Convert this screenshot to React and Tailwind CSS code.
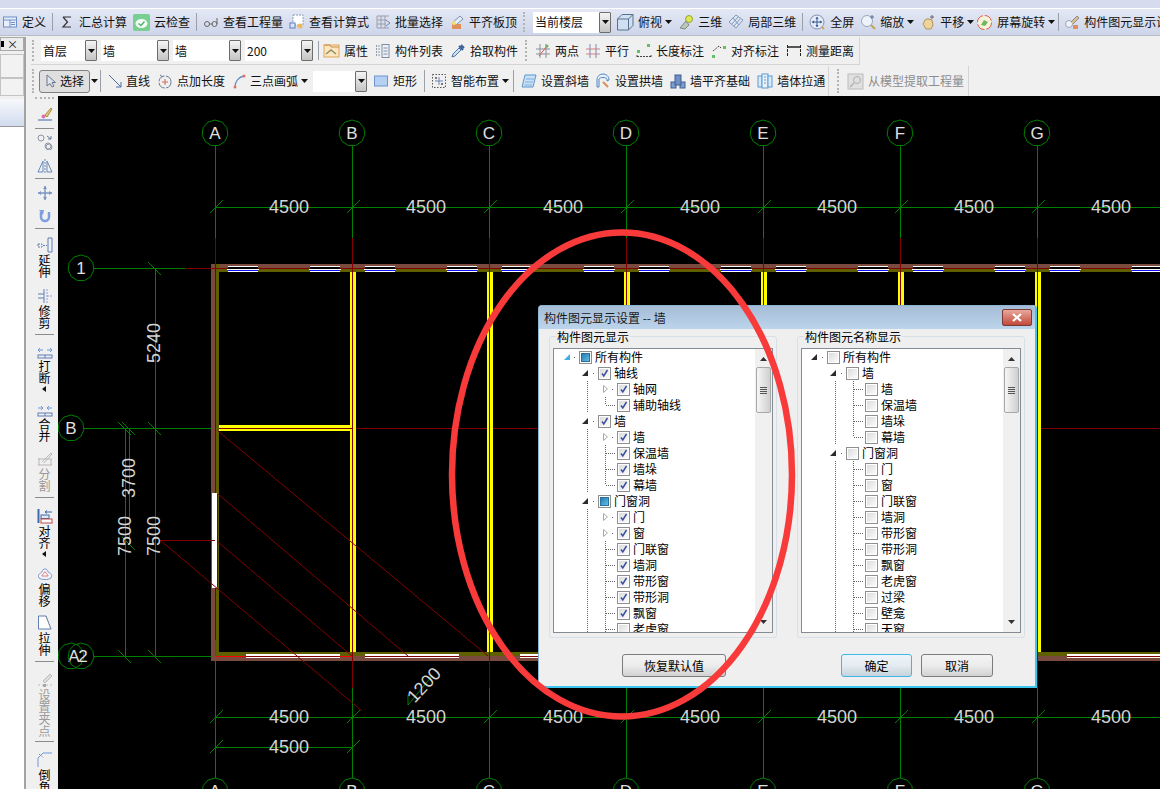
import React from "react";

// =========================
// SMALL PARTS
// =========================

const I = ({ children, w = 16, h = 16 }) => (
  <svg width={w} height={h} viewBox={`0 0 ${w} ${h}`} fill="none" className="shrink-0">
    {children}
  </svg>
);

const Caret = () => (
  <svg width="7" height="4" viewBox="0 0 7 4" className="shrink-0">
    <path d="M0 0H7L3.5 4Z" fill="#111" />
  </svg>
);

const Sep = ({ className = "" }) => (
  <div className={`w-px self-stretch my-[4px] bg-[#9aa0aa] shrink-0 ${className}`} />
);

const Grip = ({ className = "" }) => (
  <div className={`w-[2px] self-stretch my-[3px] border-l-2 border-dotted border-[#b4b4b4] shrink-0 ${className}`} />
);

const Tool = ({ icon, label, caret, muted, className = "" }) => (
  <div className={`flex items-center gap-[4px] shrink-0 whitespace-nowrap ${className}`}>
    {icon}
    <span className={muted ? "text-[#8c8c8c]" : ""}>{label}</span>
    {caret && <span className="-ml-[1px] flex"><Caret /></span>}
  </div>
);

const Select = ({ label, className = "" }) => (
  <div className={`flex h-[21px] items-stretch bg-white shrink-0 ${className}`}>
    <span className="flex-1 pl-[2px] flex items-center">{label}</span>
    <span className="w-[12px] flex items-center justify-center border border-[#6d6d6d] rounded-[1px] bg-linear-to-b from-[#f4f4f4] to-[#c4c4c4]">
      <Caret />
    </span>
  </div>
);

// =========================
// TOOLBAR ICONS
// =========================

const icons = {
  define: <I><rect x="1.5" y="3" width="13" height="10" fill="#e8eefb" stroke="#6d8fc4" /><path d="M1.5 6H14.5M8 6V13M9 8.5H13M9 10.5H13" stroke="#6d8fc4" /></I>,
  sigma: <I><path d="M4 3H12M4 3L8.5 8L4 13H12" stroke="#333" strokeWidth="1.2" /></I>,
  cloud: <I w={17} h={17}><rect width="17" height="17" rx="2" fill="#79cf92" /><ellipse cx="8.5" cy="9.5" rx="6" ry="4.5" fill="#f2fbf4" /><path d="M5.5 9.5L8 11.5L11.5 7.5" stroke="#57b673" strokeWidth="1.5" /></I>,
  glasses: <I><circle cx="4" cy="10" r="2.5" stroke="#666" /><circle cx="11.5" cy="10" r="2.5" stroke="#666" /><path d="M6.5 10H9M14 10V4" stroke="#666" /></I>,
  sheet: <I><rect x="4" y="1" width="10" height="10" fill="#fff" stroke="#8c9bb5" strokeDasharray="2 1" /><rect x="1" y="9" width="5" height="5" fill="#d8e5fb" stroke="#5a7fc2" /><circle cx="11" cy="12" r="2.5" fill="#e9b95e" /></I>,
  batch: <I><path d="M2 2H14M2 6H11M2 10H11M2 14H14M2 2V14M6 2V14M10 2V14" stroke="#9a9fa8" /><path d="M11 6L15 9L11 12" stroke="#7a88a5" /></I>,
  level: <I><path d="M3 9L11 2L14 5L7 11Z" fill="#e5ecf7" stroke="#7d8ea8" /><rect x="3" y="10" width="9" height="5" fill="#df8f58" /><circle cx="5" cy="9" r="2" fill="#f3e27a" /></I>,
  box: <I w={18} h={18}><path d="M1.5 6H12.5V17H1.5ZM1.5 6L6 1.5H17V12.5L12.5 17M12.5 6L17 1.5" fill="#cfe0f2" stroke="#58708e" /></I>,
  three: <I><circle cx="11" cy="5" r="3.5" fill="#dfe84f" stroke="#8ea53a" /><path d="M2 14L8 7L11 11L7 15Z" fill="#b7c6b8" stroke="#7f8c7f" /></I>,
  local: <I><path d="M8 1L15 6L8 14L1 8Z" fill="#dce6f3" stroke="#8299b8" /><path d="M5 4L11 11M10 3L4 10M12 5L6 12" stroke="#8299b8" /></I>,
  full: <I w={17} h={17}><circle cx="8" cy="8" r="7" fill="#e4ebf7" stroke="#7f93b6" /><path d="M8 3V13M3 8H13" stroke="#375a92" /><path d="M8 3L6.5 5H9.5ZM8 13L6.5 11H9.5ZM3 8L5 6.5V9.5ZM13 8L11 6.5V9.5Z" fill="#375a92" /><path d="M13 13L15 15" stroke="#d8a54a" strokeWidth="2" /></I>,
  zoom: <I><circle cx="7" cy="7" r="5.5" fill="#eef3fb" stroke="#98a6bd" /><path d="M11 11L15 15" stroke="#c9a24f" strokeWidth="2" /><path d="M12 1V5M10 3H14" stroke="#58708e" /></I>,
  pan: <I><path d="M3 10L5 6L7 5L9 5L12 6L13 11L11 15H6Z" fill="#ecd49a" stroke="#b4945a" /><path d="M12 1V5M10 3H14" stroke="#666" /></I>,
  rotate: <I w={17} h={17}><circle cx="8.5" cy="8.5" r="7" fill="#f7f3da" stroke="#e25b4b" strokeDasharray="9 2" /><path d="M5 11L8 6L12 8L9 12Z" fill="#6fb85f" /></I>,
  display: <I><circle cx="5" cy="10" r="3.5" fill="#eef2f8" stroke="#9aa5b8" /><path d="M7 8L13 2L15 4L9 10" fill="#d8c08c" stroke="#8d8d8d" /><rect x="9" y="11" width="5" height="4" fill="#d98e68" /></I>,
  attr: <I w={17} h={17}><rect x="1" y="3" width="15" height="12" fill="#fbe6c0" stroke="#e0a35a" /><path d="M3 12L8 8L13 12" stroke="#8b8f6a" strokeWidth="1.5" /><path d="M1 3H7L8 5H16" stroke="#c98e4a" /></I>,
  list: <I><path d="M1.5 2V14M4 2V14" stroke="#8f9aaa" strokeDasharray="2 1" /><rect x="7" y="1.5" width="7" height="13" fill="#eef2f8" stroke="#7e8ca3" /><path d="M8.5 5H12.5M8.5 8H12.5M8.5 11H12.5" stroke="#7e8ca3" /></I>,
  picker: <I><path d="M2 14L3 11L9 5L11 7L5 13Z" fill="#cfe1f5" stroke="#4f74a8" /><path d="M9 3L13 7M11 2L14 5" stroke="#3e6296" strokeWidth="2" /></I>,
  twoPt: <I><path d="M1 6H15M1 11H15M5 1V15M11 1V15" stroke="#8b8fa0" /><path d="M4 13L12 3" stroke="#d95a4b" /><circle cx="12" cy="3" r="1.5" fill="#66b85c" /></I>,
  parallel: <I><path d="M1 6H15M1 11H15" stroke="#d98080" /><path d="M5 1V15M11 1V15" stroke="#7f86ad" /></I>,
  lenDim: <I><rect x="11" y="1" width="3" height="3" fill="#62c263" /><rect x="1" y="7" width="3" height="3" fill="#62c263" /><path d="M1 12V15M15 12V15M1 13.5H15" stroke="#444" strokeDasharray="2 1" /></I>,
  alignDim: <I><rect x="1" y="12" width="3" height="3" fill="#62c263" /><rect x="12" y="3" width="3" height="3" fill="#62c263" /><path d="M2 8L8 3L10 5" stroke="#444" strokeDasharray="2 1" /></I>,
  measure: <I><path d="M1.5 2V14M14.5 2V14" stroke="#222" strokeDasharray="3 1" /><path d="M1 4H15" stroke="#222" strokeWidth="1.5" /></I>,
  cursor: <I w={12} h={14}><path d="M2 1L2 12L5 9.5L7 13L9 12L7 8.5L10.5 8.5Z" fill="#dfe6f2" stroke="#6a7688" /></I>,
  line: <I w={14} h={14}><path d="M1 1L13 13M13 13H8M13 13V8" stroke="#4a6fa5" /></I>,
  ptLen: <I><circle cx="8" cy="9" r="6" stroke="#6c7a92" strokeDasharray="8 1.5" /><path d="M8 6V12M5 9H11" stroke="#d06a5a" /><path d="M3 2L6 4" stroke="#6c7a92" /></I>,
  arc: <I w={13} h={15}><path d="M2 13C2 7 6 3 11 2" stroke="#6a8fc2" strokeWidth="1.3" /><circle cx="2" cy="13" r="1.5" fill="#e0735f" /><circle cx="11" cy="2" r="1.5" fill="#e0735f" /></I>,
  rect: <I><rect x="1.5" y="3" width="13" height="10" fill="#b6d0f3" stroke="#6f95cb" /></I>,
  smart: <I><rect x="1.5" y="1.5" width="13" height="13" stroke="#555" strokeDasharray="1.5 1.5" /><path d="M8 4V12M4 8H12" stroke="#6b87b5" /><circle cx="5" cy="5" r="1" fill="#555" /><circle cx="11" cy="11" r="1" fill="#555" /></I>,
  slant: <I><path d="M4 2H15L12 14H1Z" fill="#c9e0f6" stroke="#5d96cc" /><path d="M5 6H13M4 9H12M3.5 12H11" stroke="#7fb0dc" /></I>,
  archWall: <I><path d="M2 7C2 3 5 1 8 1C11 1 14 3 14 7L12 8V6C11 4 5 4 4 6V14H2Z" fill="#e6f0fb" stroke="#4d87bd" /><path d="M8 9L13 14" stroke="#dd8c55" strokeWidth="2" /></I>,
  alignBase: <I><rect x="1" y="9" width="5" height="6" fill="#7f9ed0" stroke="#3f5f93" /><rect x="10" y="9" width="5" height="6" fill="#7f9ed0" stroke="#3f5f93" /><rect x="5" y="2" width="6" height="10" fill="#6f90c6" stroke="#3f5f93" /></I>,
  through: <I><rect x="1" y="3" width="4" height="11" fill="#dbeafa" stroke="#5d9bd0" /><rect x="5" y="1" width="6" height="14" fill="#e9f3fc" stroke="#5d9bd0" /><rect x="11" y="3" width="4" height="11" fill="#dbeafa" stroke="#5d9bd0" /><path d="M7 4H9M7 7H9M7 10H9" stroke="#5d9bd0" /></I>,
  extract: <I w={17} h={17}><rect x="1" y="1" width="15" height="15" fill="#e0e0e0" stroke="#bcbcbc" /><circle cx="10" cy="7" r="3.5" stroke="#b0b0b0" /><path d="M7 10L3 14" stroke="#b0b0b0" strokeWidth="1.5" /></I>,
};

const vIcons = {
  brush: <I><path d="M8 9L14 2L15 3L10 11Z" fill="#e8c66e" stroke="#a78d45" /><circle cx="6.5" cy="10.5" r="2" fill="#d774a8" /><path d="M1 14H15" stroke="#5c7fb5" strokeWidth="1.2" /></I>,
  copy: <I><circle cx="4" cy="4" r="3" stroke="#8b95a6" /><path d="M10 2L14 5M14 5H11M14 5V2" stroke="#6a7f9f" /><circle cx="11" cy="12" r="3" stroke="#8b95a6" /><circle cx="12" cy="13" r="3" stroke="#8b95a6" /></I>,
  mirror: <I><path d="M8 1V15" stroke="#6a89bc" strokeDasharray="2 1" /><path d="M6 3L1 14H6ZM10 3L15 14H10Z" stroke="#6a89bc" /></I>,
  move: <I><path d="M8 1V15M1 8H15" stroke="#7a95c2" strokeWidth="1.4" /><path d="M8 1L6 4H10ZM8 15L6 12H10ZM1 8L4 6V10ZM15 8L12 6V10Z" fill="#7a95c2" /></I>,
  rotate: <I><path d="M4 4V9A4 4 0 0 0 12 9V4" stroke="#7d9de0" strokeWidth="2.5" /><path d="M2 2L7 2L6 7Z" fill="#7d9de0" /></I>,
  extend: <I><path d="M11 1H15V15H11Z" stroke="#5f7fb5" /><path d="M1 7H5V10H1ZM6 8.5H10" stroke="#5f7fb5" strokeDasharray="2 1" /></I>,
  trim: <I><path d="M1 6H7M1 10H7M7 1V15" stroke="#5f7fb5" /><path d="M10 1V15M10 8H15" stroke="#8ba5cf" strokeDasharray="2 1" /></I>,
  brk: <I h={12}><path d="M1 3H6M15 3H10M1 3L3 1M1 3L3 5M15 3L13 1M15 3L13 5" stroke="#6f97d9" /><rect x="1" y="8" width="14" height="3" stroke="#5f7fb5" /><path d="M8 8V11" stroke="#5f7fb5" /></I>,
  merge: <I h={12}><path d="M1 3H6L4 1M6 3L4 5M15 3H10L12 1M10 3L12 5" stroke="#6f97d9" /><rect x="1" y="8" width="14" height="3" stroke="#5f7fb5" /><path d="M8 8V11" stroke="#5f7fb5" /></I>,
  split: <I><path d="M1 8H15M1 14H15M2 14L2 7M14 14L14 8M5 11L14 2L15 3L7 12" stroke="#b8b8b8" /></I>,
  align: <I><path d="M1.5 1V15" stroke="#3f68ad" strokeWidth="2" /><rect x="4" y="7" width="8" height="3.5" fill="#dfe8f7" stroke="#3f68ad" /><rect x="4" y="11" width="11" height="4" fill="#fff" stroke="#c04b45" /><path d="M8 4H15M8 4L10 2.5M8 4L10 5.5" stroke="#3f68ad" /></I>,
  offset: <I><path d="M2 12C0 8 4 7 5 6C5 2 11 2 11 6C13 7 16 8 14 12C12 14 4 14 2 12Z" fill="#eef3fb" stroke="#7f9cc8" /><path d="M5 10C5 8 7 8 7 7C7 5.5 9 5.5 9 7C9 8 11 8 11 10Z" fill="#fff" stroke="#e07a7a" /></I>,
  stretch: <I><path d="M1.5 1H9L14 14H1.5Z" fill="#fff" stroke="#5f7fb5" /><path d="M9 1L14 14" stroke="#8b8b8b" strokeDasharray="1.5 1.5" /></I>,
  grip: <I><path d="M6 9L13 2L15 4L8 11Z" fill="#dcdcdc" stroke="#bcbcbc" /><path d="M1 13H15" stroke="#bcbcbc" strokeDasharray="2 2" /><rect x="6" y="12" width="3" height="3" fill="#a8a8a8" /></I>,
  chamfer: <I><path d="M1 15V6L6 1H15" stroke="#6f97d9" /><path d="M2 2L7 6" stroke="#8f8f8f" strokeDasharray="1.5 1.5" /></I>,
};

// =========================
// VERTICAL TOOLBAR
// =========================

const VSep = ({ className }) => <div className={`w-[19px] h-px bg-[#8c8c8c] shrink-0 ${className}`} />;

const VText = ({ text, muted, arrow }) => (
  <div className={`flex flex-col items-center mt-[1px] shrink-0 leading-[12px] ${muted ? "text-[#9a9a9a]" : "text-black"}`}>
    {text.split("").map((c, i) => (
      <span key={i} className="h-[12px]">{c}</span>
    ))}
    {arrow && (
      <svg width="4" height="6" viewBox="0 0 4 6" className="mt-[2px]">
        <path d="M4 0V6L0 3Z" fill="#111" />
      </svg>
    )}
  </div>
);

const SideBar = () => (
  <div className="w-[27px] shrink-0 bg-[#f0f0f0] flex flex-col items-center overflow-hidden">
    <div className="h-[2px] w-[19px] mt-[1px] border-t-2 border-dotted border-[#b4b4b4] shrink-0" />
    <div className="mt-[7px] flex shrink-0">{vIcons.brush}</div>
    <VSep className="mt-[6px]" />
    <div className="mt-[5px] flex shrink-0">{vIcons.copy}</div>
    <div className="mt-[8px] flex shrink-0">{vIcons.mirror}</div>
    <VSep className="mt-[4px]" />
    <div className="mt-[6px] flex shrink-0">{vIcons.move}</div>
    <div className="mt-[7px] flex shrink-0">{vIcons.rotate}</div>
    <VSep className="mt-[4px]" />
    <div className="mt-[8px] flex shrink-0">{vIcons.extend}</div>
    <VText text="延伸" />
    <div className="mt-[10px] flex shrink-0">{vIcons.trim}</div>
    <VText text="修剪" />
    <VSep className="mt-[5px]" />
    <div className="mt-[12px] flex shrink-0">{vIcons.brk}</div>
    <VText text="打断" arrow />
    <div className="mt-[13px] flex shrink-0">{vIcons.merge}</div>
    <VText text="合并" />
    <div className="mt-[9px] flex shrink-0">{vIcons.split}</div>
    <VText text="分割" muted />
    <VSep className="mt-[5px]" />
    <div className="mt-[10px] flex shrink-0">{vIcons.align}</div>
    <VText text="对齐" arrow />
    <div className="mt-[9px] flex shrink-0">{vIcons.offset}</div>
    <VText text="偏移" />
    <div className="mt-[8px] flex shrink-0">{vIcons.stretch}</div>
    <VText text="拉伸" />
    <VSep className="mt-[5px]" />
    <div className="mt-[10px] flex shrink-0">{vIcons.grip}</div>
    <VText text="设置夹点" muted />
    <VSep className="mt-[4px]" />
    <div className="mt-[10px] flex shrink-0">{vIcons.chamfer}</div>
    <VText text="倒角" />
  </div>
);

// =========================
// CAD DRAWING
// =========================

const COLS = [
  { x: 215, n: "A" },
  { x: 352, n: "B" },
  { x: 489, n: "C" },
  { x: 626, n: "D" },
  { x: 763, n: "E" },
  { x: 900, n: "F" },
  { x: 1037, n: "G" },
];
const G = "#008000";
const R = "#800000";
const TOP_WIN = [228, 310, 365, 447, 502, 584, 639, 721, 776, 858, 913, 995, 1050, 1132];
const BOTTOM_WIN = [246, 365, 520, 1067];

const Bubble = ({ x, y, label, dx = 0 }) => {
  const pts = Array.from({ length: 11 }, (_, i) => {
    const a = (i / 11) * Math.PI * 2 - Math.PI / 2;
    return `${x + 13 * Math.cos(a)},${y + 13 * Math.sin(a)}`;
  }).join(" ");
  return (
    <g>
      <polygon points={pts} fill="none" stroke={G} />
      <text x={x + dx} y={y + 6} textAnchor="middle" fontSize="17" fill="#e0e0e0">{label}</text>
    </g>
  );
};

const Dim = ({ x, y, text, rotate }) => (
  <text
    x={x}
    y={y}
    textAnchor="middle"
    dominantBaseline="central"
    fontSize="18"
    fill="#d4d4d4"
    transform={rotate ? `rotate(${rotate} ${x} ${y})` : undefined}
  >
    {text}
  </text>
);

const Tick = ({ x, y, back }) =>
  back ? (
    <path d={`M${x - 7} ${y - 6}L${x + 6} ${y + 7}`} stroke={G} />
  ) : (
    <path d={`M${x - 6} ${y + 6}L${x + 7} ${y - 7}`} stroke={G} />
  );

const Column = ({ x }) => (
  <g>
    <rect x={x - 2} y="272" width="6" height="380" fill="#ffff00" />
    <path d={`M${x + 0.5} 238V688`} stroke={R} />
  </g>
);

const Drawing = () => (
  <svg
    viewBox="58 96 1102 693"
    width="1102"
    height="693"
    className="block font-['Liberation_Sans',sans-serif]"
    shapeRendering="crispEdges"
  >
    <rect x="58" y="96" width="1102" height="693" fill="#000" />

    {/* axis lines */}
    {COLS.map((c) => (
      <g key={c.n}>
        <path d={`M${c.x + 0.5} 146V238`} stroke={G} />
        <path d={`M${c.x + 0.5} 688V778`} stroke={G} />
        <path d={`M${c.x + 0.5} 238V688`} stroke={R} />
        <Tick x={c.x + 0.5} y={207.5} />
        <Tick x={c.x + 0.5} y={717.5} />
      </g>
    ))}
    <path d="M215.5 656V778M352.5 656V778" stroke={G} />
    <path d="M94 268.5H185M84 428.5H215M94 656.5H215" stroke={G} />
    <path d="M185 268.5H1160M219 428.5H1160" stroke={R} />

    {/* dimension lines */}
    <path d="M215 207.5H1160M215 717.5H1160M215 747.5H352" stroke={G} />
    <Tick x={215.5} y={747.5} />
    <Tick x={352.5} y={747.5} />
    <path d="M155.5 268V656M125.5 428V656M129.5 428V543" stroke={G} />
    <Tick x={155} y={268} back />
    <Tick x={155} y={428} back />
    <Tick x={155} y={656} back />
    <Tick x={125} y={428} back />
    <Tick x={129} y={428} back />
    <Tick x={129} y={543} back />
    <Tick x={125} y={656} back />

    {/* walls */}
    <rect x="211" y="264" width="949" height="4" fill="#7b4a3f" />
    <rect x="211" y="268" width="949" height="4" fill="#5f5f00" />
    <rect x="211" y="264" width="4" height="397" fill="#7b4a3f" />
    <rect x="215" y="264" width="4" height="392" fill="#5f5f00" />
    <rect x="215" y="652" width="945" height="4" fill="#5f5f00" />
    <rect x="211" y="656" width="949" height="5" fill="#7b4a3f" />
    <path d="M185 268.5H1160" stroke={R} />
    <path d="M215.5 238V656" stroke={R} />
    <path d="M215.5 656.5H352" stroke="#ff0000" />
    <path d="M215.5 640V656" stroke="#ff0000" />

    {/* columns */}
    {COLS.slice(1).map((c) => <Column key={c.n} x={c.x} />)}
    <rect x="219" y="425" width="133" height="6" fill="#ffff00" />
    <rect x="219" y="428" width="133" height="1" fill={R} />

    {/* windows */}
    {TOP_WIN.map((x) => (
      <g key={x}>
        <rect x={x} y="266" width="30" height="1" fill="#fff" />
        <rect x={x} y="267" width="30" height="2" fill="#000" />
        <rect x={x - 1} y="269" width="32" height="1" fill="#fff" />
        <rect x={x} y="270" width="30" height="1" fill="#1010ff" />
        <rect x={x} y="271" width="30" height="1" fill="#fff" />
      </g>
    ))}
    {BOTTOM_WIN.map((x) => (
      <g key={x}>
        <rect x={x} y="654" width="94" height="4" fill="#fff" />
        <rect x={x} y="656" width="94" height="1" fill={R} />
      </g>
    ))}
    <rect x="212" y="493" width="5" height="95" fill="#fff" />
    <rect x="217" y="494" width="1" height="93" fill="#1010ff" />

    {/* slab lines */}
    <g shapeRendering="auto" stroke={R}>
      <path d="M160 540L362 711" />
      <path d="M218 542L352 656" />
      <path d="M218 494L408 656" />
      <path d="M218 431L488 656" />
      <path d="M160 540.5H215" />
    </g>

    {/* labels */}
    <g shapeRendering="auto">
      {COLS.map((c) => <Bubble key={c.n} x={c.x} y={133} label={c.n} />)}
      {COLS.map((c) => <Bubble key={c.n} x={c.x} y={791} label={c.n} />)}
      <Bubble x={81} y={268} label="1" />
      <Bubble x={71} y={428} label="B" />
      <Bubble x={71} y={656} label="A" dx={3} />
      <Bubble x={81} y={656} label="2" dx={2} />

      {COLS.map((c) => (
        <g key={c.n}>
          <Dim x={c.x + 74} y={207} text="4500" />
          <Dim x={c.x + 74} y={717} text="4500" />
        </g>
      ))}
      <Dim x={289} y={747} text="4500" />
      <Dim x={154} y={343} text="5240" rotate={-90} />
      <Dim x={154} y={536} text="7500" rotate={-90} />
      <Dim x={125} y={536} text="7500" rotate={-90} />
      <Dim x={129} y={478} text="3700" rotate={-90} />
      <path d="M408 705L432 676M408 695V705" stroke={G} />
      <Dim x={424} y={685} text="1200" rotate={-47} />
    </g>
  </svg>
);

// =========================
// TREE IN THE DIALOG
// =========================

const Check = ({ state }) => (
  <span className="w-[13px] h-[13px] shrink-0 border border-[#8e8f8f] p-px bg-white flex">
    {state === "tri" && <span className="flex-1 border border-[#2b6f9e] bg-linear-to-br from-[#1f7fb5] to-[#63bde4]" />}
    {state !== "tri" && (
      <span className="flex-1 bg-linear-to-br from-[#dcdcdc] to-[#fbfbfb] flex">
        {state === "on" && (
          <svg width="9" height="9" viewBox="0 0 9 9">
            <path d="M2 4.5L3.8 7L7.5 1" fill="none" stroke="#3c4fa0" strokeWidth="1.5" />
          </svg>
        )}
      </span>
    )}
  </span>
);

const Expander = ({ kind, last }) => (
  <svg width="20" height="16" viewBox="0 0 20 16" className="shrink-0">
    {kind === "root" && <path d="M5 11L11 5V11Z" fill="#3bb0e8" />}
    {kind === "down" && <path d="M4 11L10 5V11Z" fill="#2b2b2b" />}
    {kind === "right" && <path d="M6.5 4.5V11.5L10.5 8Z" fill="#fff" stroke="#a8a8a8" />}
    {kind === "leaf" && (
      <path
        d={`M8.5 0V${last ? 8 : 16}M8.5 8.5H18`}
        stroke="#666"
        strokeDasharray="1 1"
        fill="none"
        shapeRendering="crispEdges"
      />
    )}
    {kind !== "leaf" && <rect x="15" y="8" width="1" height="1" fill="#666" />}
  </svg>
);

const TreeRow = ({ label, level, state, kind, last }) => (
  <div className="flex h-4 items-center">
    {level > 0 && <span className="w-[19px] shrink-0" />}
    {level > 1 && (
      <svg width="19" height="16" viewBox="0 0 19 16" className="shrink-0">
        <path d="M9.5 0V16" stroke="#666" strokeDasharray="1 1" shapeRendering="crispEdges" />
      </svg>
    )}
    <Expander kind={kind} last={last} />
    <Check state={state} />
    <span className="ml-[3px] whitespace-nowrap text-black">{label}</span>
  </div>
);

const leftTree = [
  ["所有构件", 0, "tri", "root"],
  ["轴线", 1, "on", "down"],
  ["轴网", 2, "on", "right"],
  ["辅助轴线", 2, "on", "leaf", true],
  ["墙", 1, "on", "down"],
  ["墙", 2, "on", "right"],
  ["保温墙", 2, "on", "leaf"],
  ["墙垛", 2, "on", "leaf"],
  ["幕墙", 2, "on", "leaf", true],
  ["门窗洞", 1, "tri", "down"],
  ["门", 2, "on", "right"],
  ["窗", 2, "on", "right"],
  ["门联窗", 2, "on", "leaf"],
  ["墙洞", 2, "on", "leaf"],
  ["带形窗", 2, "on", "leaf"],
  ["带形洞", 2, "on", "leaf"],
  ["飘窗", 2, "on", "leaf"],
  ["老虎窗", 2, "off", "leaf"],
];

const rightTree = [
  ["所有构件", 0, "off", "down"],
  ["墙", 1, "off", "down"],
  ["墙", 2, "off", "leaf"],
  ["保温墙", 2, "off", "leaf"],
  ["墙垛", 2, "off", "leaf"],
  ["幕墙", 2, "off", "leaf", true],
  ["门窗洞", 1, "off", "down"],
  ["门", 2, "off", "leaf"],
  ["窗", 2, "off", "leaf"],
  ["门联窗", 2, "off", "leaf"],
  ["墙洞", 2, "off", "leaf"],
  ["带形窗", 2, "off", "leaf"],
  ["带形洞", 2, "off", "leaf"],
  ["飘窗", 2, "off", "leaf"],
  ["老虎窗", 2, "off", "leaf"],
  ["过梁", 2, "off", "leaf"],
  ["壁龛", 2, "off", "leaf"],
  ["天窗", 2, "off", "leaf"],
];

const ScrollBar = () => (
  <div className="w-[17px] shrink-0 bg-[#f0f0f0] flex flex-col items-center">
    <svg width="7" height="4" viewBox="0 0 7 4" className="mt-[8px] shrink-0">
      <path d="M0 4H7L3.5 0Z" fill="#333" />
    </svg>
    <div className="mt-[6px] w-[15px] h-[46px] shrink-0 rounded-[2px] border border-[#a8a8a8] bg-linear-to-r from-[#f6f6f6] to-[#cfcfcf] flex flex-col items-center justify-center gap-px">
      <span className="w-[7px] h-px bg-[#555]" />
      <span className="w-[7px] h-px bg-[#555]" />
      <span className="w-[7px] h-px bg-[#555]" />
      <span className="w-[7px] h-px bg-[#555]" />
    </div>
    <svg width="7" height="4" viewBox="0 0 7 4" className="mt-auto mb-[8px] shrink-0">
      <path d="M0 0H7L3.5 4Z" fill="#333" />
    </svg>
  </div>
);

const TreeGroup = ({ title, rows }) => (
  <div className="relative w-[228px] h-[302px] border border-[#d9dfe6] rounded-[3px] pt-[11px] px-[3px]">
    <span className="absolute left-[6px] -top-[8px] bg-[#efefef] px-px leading-[16px] text-black">{title}</span>
    <div className="h-[285px] border border-[#858b93] bg-white flex overflow-hidden">
      <div className="flex-1 pl-[5px] overflow-hidden">
        {rows.map((r, i) => (
          <TreeRow key={i} label={r[0]} level={r[1]} state={r[2]} kind={r[3]} last={r[4]} />
        ))}
      </div>
      <ScrollBar />
    </div>
  </div>
);

const DlgButton = ({ label, className = "" }) => (
  <div className={`h-[23px] rounded-[3px] border flex items-center justify-center text-black bg-linear-to-b ${className}`}>
    {label}
  </div>
);

const Dialog = () => (
  <div className="absolute left-[480px] top-[209px] w-[499px] h-[383px] bg-[#efefef] rounded-t-[4px] border border-[#8db4d2] border-r-2 border-b-2 border-r-[#3cc6ee] border-b-[#3cc6ee]">
    <div className="h-[23px] rounded-t-[3px] bg-linear-to-b from-[#a6bcd6] to-[#bcd4ec] flex items-center pl-[5px] pr-[3px] text-[#1a1a1a]">
      <span>构件图元显示设置 -- 墙</span>
      <span className="ml-auto w-[30px] h-[17px] rounded-[2px] border border-[#7a3a36] bg-linear-to-b from-[#e8a79c] to-[#c0473a] flex items-center justify-center">
        <svg width="12" height="9" viewBox="0 0 12 9">
          <path d="M2 1L10 8M10 1L2 8" stroke="#fff" strokeWidth="2.2" />
        </svg>
      </span>
    </div>
    <div className="flex gap-[20px] pl-[10px] mt-[7px]">
      <TreeGroup title="构件图元显示" rows={leftTree} />
      <TreeGroup title="构件图元名称显示" rows={rightTree} />
    </div>
    <div className="flex mt-[16px] pl-[83px]">
      <DlgButton label="恢复默认值" className="w-[104px] border-[#7c7c7c] from-[#f3f3f3] via-[#ececec] to-[#d2d2d2]" />
      <DlgButton label="确定" className="ml-[115px] w-[71px] border-[#3fb7ea] from-[#eef4f8] via-[#e4ecf2] to-[#c7d2da]" />
      <DlgButton label="取消" className="ml-[9px] w-[72px] border-[#7c7c7c] from-[#f3f3f3] via-[#ececec] to-[#d2d2d2]" />
    </div>
  </div>
);

// =========================
// PAGE
// =========================

function App() {
  return (
    <div className="w-[1160px] h-[789px] overflow-hidden bg-[#f0f0f0] text-[12px] text-[#111] leading-none font-['Noto_Sans_CJK_SC','Liberation_Sans',sans-serif]">

      {/* TOP STRIP */}
      <div className="h-[8px] bg-[#d6dbee] border-b border-white box-content" />

      {/* MAIN TOOLBAR */}
      <div className="h-[27px] flex items-center pl-[2px] gap-[6px] bg-linear-to-b from-[#e4e8f5] to-[#cdd5e9] border-b border-[#b8bcc6] overflow-hidden whitespace-nowrap">
        <Tool icon={icons.define} label="定义" />
        <Sep />
        <Tool icon={icons.sigma} label="汇总计算" className="gap-[3px]" />
        <Tool icon={icons.cloud} label="云检查" className="gap-[3px]" />
        <Sep />
        <Tool icon={icons.glasses} label="查看工程量" />
        <Tool icon={icons.sheet} label="查看计算式" />
        <Tool icon={icons.batch} label="批量选择" />
        <Tool icon={icons.level} label="平齐板顶" />
        <Grip />
        <Select label="当前楼层" className="w-[78px] ml-[2px]" />
        <Tool icon={icons.box} label="俯视" caret className="gap-[3px] -ml-[1px]" />
        <Tool icon={icons.three} label="三维" />
        <Tool icon={icons.local} label="局部三维" />
        <Sep />
        <Tool icon={icons.full} label="全屏" />
        <Tool icon={icons.zoom} label="缩放" caret />
        <Tool icon={icons.pan} label="平移" caret />
        <Tool icon={icons.rotate} label="屏幕旋转" caret className="-ml-[4px]" />
        <Sep className="-ml-[3px]" />
        <Tool icon={icons.display} label="构件图元显示设置" className="-ml-[1px]" />
      </div>

      <div className="flex h-[752px] mt-px">

        {/* LEFT PANEL */}
        <div className="w-[26px] shrink-0 flex flex-col border-r-2 border-[#a3a3a3]">
          <div className="h-[14px] bg-[#ececec] border border-[#a8a8a8] flex items-center justify-between pr-[5px] text-[11px]">
            <span className="w-[3px] h-[6px] bg-black" />
            <span>×</span>
          </div>
          <div className="h-[24px] mt-[3px] bg-[#f2f2f2] border border-[#c4c4c4]" />
          <div className="h-[18px] bg-[#f2f2f2] border border-[#c4c4c4]" />
          <div className="h-[28px] mt-[3px] bg-linear-to-b from-[#f7f8fc] to-[#d2dcef] border-b border-[#9a9a9a]" />
          <div className="flex-1 bg-white" />
        </div>

        <div className="flex-1 min-w-0 pl-[5px] flex flex-col">

          {/* SECOND TOOLBAR */}
          <div className="h-[28px] shrink-0 w-[829px] flex items-center gap-[7px] pl-[1px] bg-[#f0f0f0] border-b border-r border-[#d4d4d4]">
            <Grip />
            <Select label="首层" className="w-[56px]" />
            <Select label="墙" className="w-[68px] -ml-[3px]" />
            <Select label="墙" className="w-[68px] -ml-[3px]" />
            <Select label="200" className="w-[68px] -ml-[3px]" />
            <Sep className="-ml-[2px]" />
            <Tool icon={icons.attr} label="属性" className="-ml-[3px]" />
            <Tool icon={icons.list} label="构件列表" />
            <Tool icon={icons.picker} label="拾取构件" />
            <Grip />
            <Tool icon={icons.twoPt} label="两点" className="ml-[1px]" />
            <Tool icon={icons.parallel} label="平行" className="-ml-[1px]" />
            <Tool icon={icons.lenDim} label="长度标注" />
            <Tool icon={icons.alignDim} label="对齐标注" />
            <Tool icon={icons.measure} label="测量距离" />
          </div>

          {/* THIRD TOOLBAR */}
          <div className="h-[30px] shrink-0 flex mt-px">
            <div className="w-[798px] flex items-center gap-[7px] pl-[1px] bg-[#f0f0f0] border-r border-[#d4d4d4]">
              <Grip />
              <div className="flex items-center gap-[1px] -ml-[2px]">
                <div className="h-[23px] w-[51px] flex items-center justify-center gap-[3px] rounded-[3px] border border-[#808080] bg-[#dfdfdf]">
                  {icons.cursor}
                  <span>选择</span>
                </div>
                <Caret />
              </div>
              <Sep className="-ml-[5px]" />
              <Tool icon={icons.line} label="直线" />
              <Tool icon={icons.ptLen} label="点加长度" />
              <Tool icon={icons.arc} label="三点画弧" caret className="ml-[1px]" />
              <Select label="" className="w-[54px] -ml-[2px]" />
              <Tool icon={icons.rect} label="矩形" className="-ml-[1px] gap-[3px]" />
              <Sep />
              <Tool icon={icons.smart} label="智能布置" caret className="-ml-[1px] gap-[3px]" />
              <Sep className="-ml-[3px]" />
              <Tool icon={icons.slant} label="设置斜墙" className="gap-[3px]" />
              <Tool icon={icons.archWall} label="设置拱墙" className="-ml-[1px]" />
              <Tool icon={icons.alignBase} label="墙平齐基础" />
              <Tool icon={icons.through} label="墙体拉通" />
            </div>
            <div className="ml-[8px] w-[132px] flex items-center gap-[8px] bg-[#f0f0f0] border-r border-[#d4d4d4]">
              <Grip />
              <Tool icon={icons.extract} label="从模型提取工程量" muted />
            </div>
          </div>

          {/* WORK AREA */}
          <div className="flex-1 min-h-0 flex">
            <SideBar />
            <div className="relative flex-1 min-w-0">
              <Drawing />
              <Dialog />

              {/* RED MARKER */}
              <svg viewBox="58 96 1102 693" width="1102" height="693" className="absolute inset-0 pointer-events-none">
                <ellipse cx="622" cy="474.5" rx="170" ry="242" fill="none" stroke="#f83a3a" strokeWidth="6.5" />
              </svg>
            </div>
          </div>
        </div>
      </div>
    </div>
  );
}

export default App;
